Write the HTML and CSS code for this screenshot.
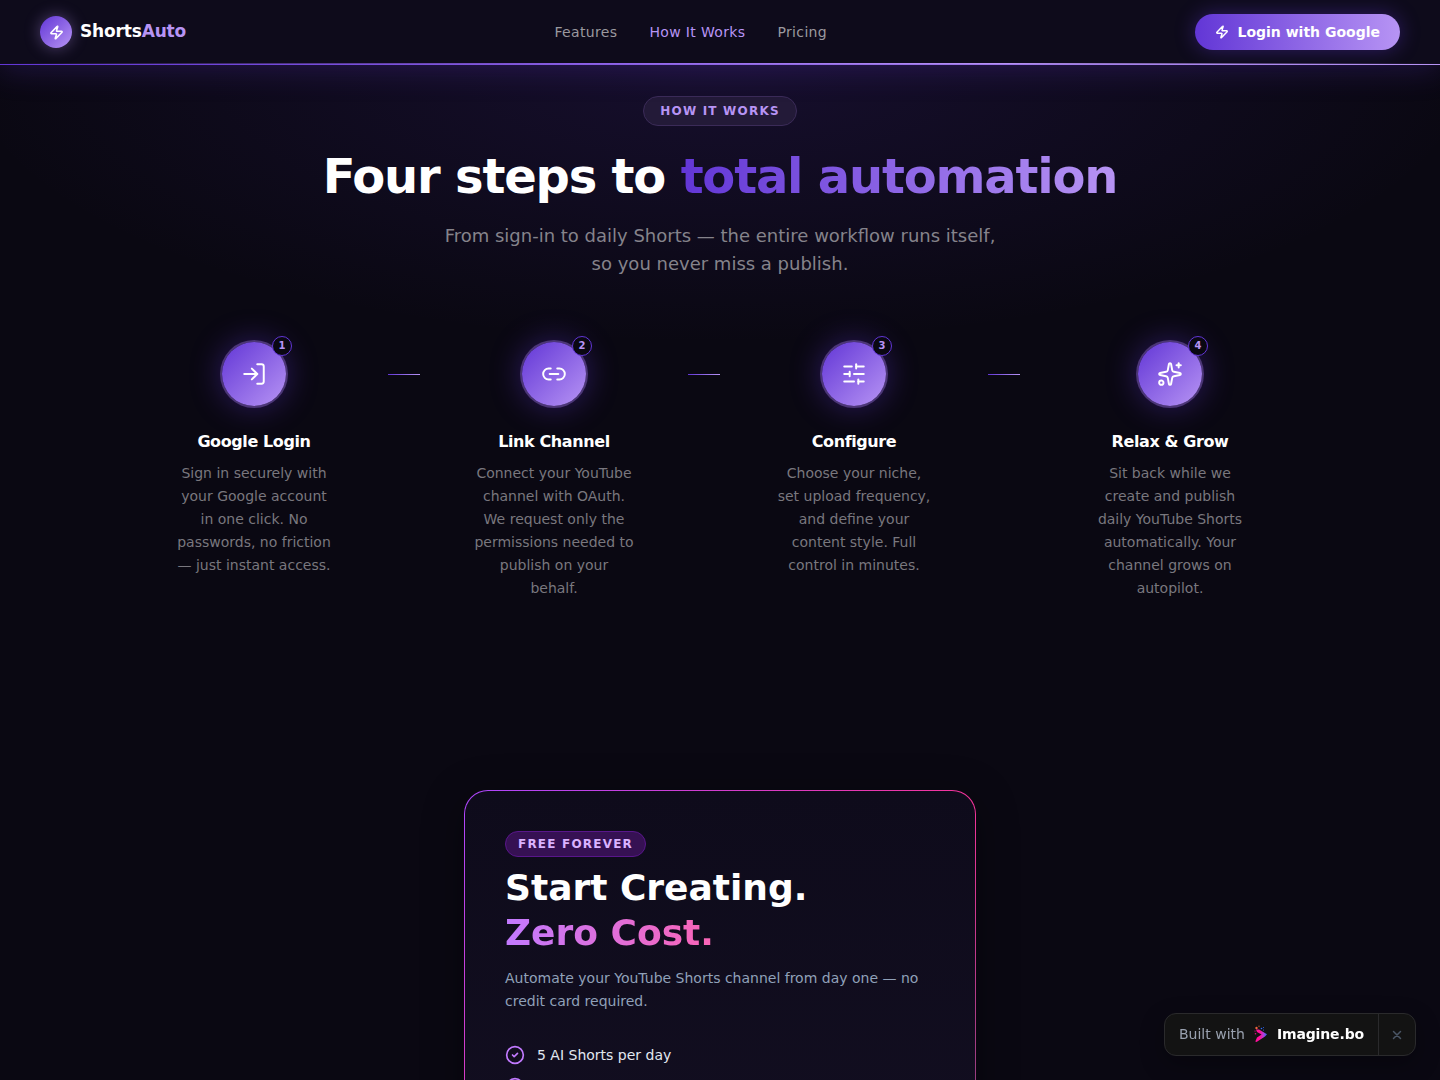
FILE: index.html
```
<!DOCTYPE html>
<html lang="en">
<head>
    <meta charset="UTF-8">
    <meta name="viewport" content="width=device-width, initial-scale=1.0">
    <title>ShortsAuto</title>
    <link rel="stylesheet" href="styles.css">
</head>
<body>
    <header class="site-header">
        <a class="logo" href="#">
            <span class="logo-mark">
                <svg width="15" height="15" viewBox="0 0 24 24" fill="none" stroke="currentColor" stroke-width="2.500" stroke-linecap="round" stroke-linejoin="round"><path d="M4 14a1 1 0 0 1-.78-1.63l9.9-10.2a.5.5 0 0 1 .86.46l-1.92 6.02A1 1 0 0 0 13 10h7a1 1 0 0 1 .78 1.63l-9.9 10.2a.5.5 0 0 1-.86-.46l1.92-6.02A1 1 0 0 0 11 14z"/></svg>
            </span>
            <span class="logo-text">Shorts<span class="logo-accent">Auto</span></span>
        </a>
        <nav class="main-nav">
            <a href="#features">Features</a>
            <a href="#how-it-works" class="active">How It Works</a>
            <a href="#pricing">Pricing</a>
        </nav>
        <button class="login-button" type="button">
            <svg width="14" height="14" viewBox="0 0 24 24" fill="none" stroke="currentColor" stroke-width="2.500" stroke-linecap="round" stroke-linejoin="round"><path d="M4 14a1 1 0 0 1-.78-1.63l9.9-10.2a.5.5 0 0 1 .86.46l-1.92 6.02A1 1 0 0 0 13 10h7a1 1 0 0 1 .78 1.63l-9.9 10.2a.5.5 0 0 1-.86-.46l1.92-6.02A1 1 0 0 0 11 14z"/></svg>
            Login with Google
        </button>
    </header>

    <main>
        <section class="how" id="how-it-works">
            <span class="pill">HOW IT WORKS</span>
            <h1>Four steps to <span class="gradient-text">total automation</span></h1>
            <p class="lead">From sign-in to daily Shorts — the entire workflow runs itself, so you never miss a publish.</p>

            <ol class="steps">
                <li class="step">
                    <div class="step-body">
                        <div class="step-icon">
                            <svg width="26" height="26" viewBox="0 0 24 24" fill="none" stroke="currentColor" stroke-width="1.800" stroke-linecap="round" stroke-linejoin="round"><path d="m10 17 5-5-5-5"/><path d="M15 12H3"/><path d="M15 3h4a2 2 0 0 1 2 2v14a2 2 0 0 1-2 2h-4"/></svg>
                            <span class="step-number">1</span>
                        </div>
                        <h2>Google Login</h2>
                        <p>Sign in securely with your Google account in one click. No passwords, no friction — just instant access.</p>
                    </div>
                    <span class="connector"></span>
                </li>
                <li class="step">
                    <div class="step-body">
                        <div class="step-icon">
                            <svg width="26" height="26" viewBox="0 0 24 24" fill="none" stroke="currentColor" stroke-width="1.800" stroke-linecap="round" stroke-linejoin="round"><path d="M9 17H7A5 5 0 0 1 7 7h2"/><path d="M15 7h2a5 5 0 1 1 0 10h-2"/><path d="M8 12h8"/></svg>
                            <span class="step-number">2</span>
                        </div>
                        <h2>Link Channel</h2>
                        <p>Connect your YouTube channel with OAuth. We request only the permissions needed to publish on your behalf.</p>
                    </div>
                    <span class="connector"></span>
                </li>
                <li class="step">
                    <div class="step-body">
                        <div class="step-icon">
                            <svg width="26" height="26" viewBox="0 0 24 24" fill="none" stroke="currentColor" stroke-width="1.800" stroke-linecap="round" stroke-linejoin="round"><path d="M10 5H3"/><path d="M21 5h-7"/><path d="M14 3v4"/><path d="M8 12H3"/><path d="M8 10v4"/><path d="M21 12h-9"/><path d="M12 19H3"/><path d="M21 19h-5"/><path d="M16 17v4"/></svg>
                            <span class="step-number">3</span>
                        </div>
                        <h2>Configure</h2>
                        <p>Choose your niche, set upload frequency, and define your content style. Full control in minutes.</p>
                    </div>
                    <span class="connector"></span>
                </li>
                <li class="step">
                    <div class="step-body">
                        <div class="step-icon">
                            <svg width="26" height="26" viewBox="0 0 24 24" fill="none" stroke="currentColor" stroke-width="1.800" stroke-linecap="round" stroke-linejoin="round"><path d="M11.017 2.814a1 1 0 0 1 1.966 0l1.051 5.558a2 2 0 0 0 1.594 1.594l5.558 1.051a1 1 0 0 1 0 1.966l-5.558 1.051a2 2 0 0 0-1.594 1.594l-1.051 5.558a1 1 0 0 1-1.966 0l-1.051-5.558a2 2 0 0 0-1.594-1.594l-5.558-1.051a1 1 0 0 1 0-1.966l5.558-1.051a2 2 0 0 0 1.594-1.594z"/><path d="M20 2v4"/><path d="M22 4h-4"/><circle cx="4" cy="20" r="2"/></svg>
                            <span class="step-number">4</span>
                        </div>
                        <h2>Relax &amp; Grow</h2>
                        <p>Sit back while we create and publish daily YouTube Shorts automatically. Your channel grows on autopilot.</p>
                    </div>
                </li>
            </ol>
        </section>

        <section class="pricing" id="pricing">
            <div class="price-card">
                <span class="tag">FREE FOREVER</span>
                <h2>Start Creating.<br><span class="pink-text">Zero Cost.</span></h2>
                <p>Automate your YouTube Shorts channel from day one — no credit card required.</p>
                <ul class="perks">
                    <li>
                        <svg width="20" height="20" viewBox="0 0 24 24" fill="none" stroke="currentColor" stroke-width="2" stroke-linecap="round" stroke-linejoin="round"><circle cx="12" cy="12" r="10"/><path d="m9 12 2 2 4-4"/></svg>
                        5 AI Shorts per day
                    </li>
                    <li>
                        <svg width="20" height="20" viewBox="0 0 24 24" fill="none" stroke="currentColor" stroke-width="2" stroke-linecap="round" stroke-linejoin="round"><circle cx="12" cy="12" r="10"/><path d="m9 12 2 2 4-4"/></svg>
                    </li>
                </ul>
            </div>
        </section>
    </main>

    <div class="badge">
        <a class="badge-link" href="#">
            <span>Built with</span>
            <svg width="16" height="18" viewBox="0 0 16 18">
                <defs>
                    <linearGradient id="badgeFill" x1="0" y1="0" x2="1" y2="0">
                        <stop offset="0.4" stop-color="#ff0f9a"/>
                        <stop offset="0.7" stop-color="#b43cd8"/>
                        <stop offset="1" stop-color="#2f6bff"/>
                    </linearGradient>
                </defs>
                <path d="M3 4.500 6 4.500 14 9.300 12 11.500 3.500 17 2.300 16.500 4 12.500 8.500 9.500 4 7z" fill="url(#badgeFill)"/>
                <circle cx="3.500" cy="3" r="1.200" fill="#f2663a"/>
                <circle cx="6" cy="1.200" r=".6" fill="#f2663a"/>
                <circle cx="2" cy="6" r=".6" fill="#ff0f9a"/>
                <circle cx="2.500" cy="8.800" r=".8" fill="#e0148a"/>
                <circle cx="8.500" cy="3.500" r=".8" fill="#2f6bff"/>
                <circle cx="10.500" cy="2.500" r=".5" fill="#2f6bff"/>
                <circle cx="10.500" cy="5" r=".6" fill="#2f6bff"/>
            </svg>
            <strong>Imagine.bo</strong>
        </a>
        <button class="badge-close" type="button" aria-label="Close">
            <svg width="12" height="12" viewBox="0 0 24 24" fill="none" stroke="currentColor" stroke-width="3" stroke-linecap="round"><path d="M5 5 19 19M19 5 5 19"/></svg>
        </button>
    </div>
</body>
</html>
```

FILE: styles.css
```
* {
    box-sizing: border-box;
}

body {
    margin: 0;
    font-family: "DejaVu Sans", sans-serif;
    color: white;
    background: #0a0812;
}

h1, h2, p, ol, ul {
    margin: 0;
    padding: 0;
}

ol, ul {
    list-style: none;
}

a {
    color: inherit;
    text-decoration: none;
}

svg {
    display: block;
    flex-shrink: 0;
}

button {
    font: inherit;
    border: none;
    cursor: pointer;
}

.site-header {
    position: sticky;
    top: 0;
    z-index: 10;
    height: 64px;
    padding: 0 40px;
    display: flex;
    align-items: center;
    justify-content: space-between;
    background: #0e0b1b;
    box-shadow: 0 4px 32px rgba(98, 54, 214, 0.25);
}

/* glowing divider: full-width line with a brighter middle above it */
.site-header::after {
    content: '';
    position: absolute;
    left: 0;
    right: 0;
    top: 63px;
    height: 2px;
    background:
        linear-gradient(90deg, transparent, #8b5fe6 40%, #b794f4 70%, transparent) top / 100% 1px no-repeat,
        linear-gradient(90deg, #6236d6, #b794f4) bottom / 100% 1px no-repeat;
}

.logo {
    display: flex;
    align-items: center;
    gap: 8px;
}

.logo-mark {
    width: 32px;
    height: 32px;
    border-radius: 50%;
    display: flex;
    align-items: center;
    justify-content: center;
    background: linear-gradient(135deg, #6236d6, #b794f4);
    box-shadow: 0 0 16px rgba(183, 148, 244, 0.4);
}

.logo-text {
    font-size: 17px;
    line-height: 28px;
    padding-bottom: 2px;
    font-weight: 700;
    letter-spacing: -0.01em;
}

.logo-accent {
    color: #b794f4;
}

.main-nav {
    display: flex;
    gap: 32px;
    font-size: 14px;
    line-height: 20px;
    letter-spacing: 0.025em;
    color: #9b999f;
}

.main-nav .active {
    color: #b794f4;
}

.login-button {
    height: 36px;
    padding: 0 20px;
    display: flex;
    align-items: center;
    gap: 8px;
    border-radius: 18px;
    color: white;
    font-size: 14px;
    font-weight: 600;
    background: linear-gradient(90deg, #6236d6, #b794f4);
    box-shadow: 0 0 20px rgba(98, 54, 214, 0.4);
}

.how {
    padding: 32px 120px 94px;
    display: flex;
    flex-direction: column;
    align-items: center;
    text-align: center;
    background: radial-gradient(ellipse 760px 280px at 50% 0, rgba(98, 54, 214, 0.14), transparent);
}

.pill {
    padding: 6px 16px;
    border: 1px solid #3b2b58;
    border-radius: 15px;
    background: #231a38;
    color: #b794f4;
    font-size: 12px;
    line-height: 16px;
    font-weight: 600;
    letter-spacing: 0.1em;
}

.how h1 {
    margin-top: 20px;
    font-size: 48px;
    line-height: 60px;
    font-weight: 700;
    letter-spacing: -0.025em;
}

.gradient-text {
    background: linear-gradient(90deg, #6236d6, #b794f4);
    -webkit-background-clip: text;
    background-clip: text;
    color: transparent;
}

.lead {
    max-width: 576px;
    margin-top: 16px;
    font-size: 18px;
    line-height: 28px;
    color: #85838b;
}

.steps {
    width: 100%;
    max-width: 1200px;
    margin-top: 64px;
    display: grid;
    grid-template-columns: repeat(4, 1fr);
}

.step {
    display: flex;
}

.step-body {
    flex: 1;
    display: flex;
    flex-direction: column;
    align-items: center;
}

.step-icon {
    position: relative;
    width: 64px;
    height: 64px;
    border-radius: 50%;
    display: flex;
    align-items: center;
    justify-content: center;
    background: linear-gradient(135deg, #6236d6, #b794f4);
    box-shadow: 0 0 0 2px #4c3677, 0 0 32px rgba(98, 54, 214, 0.45);
}

.step-number {
    position: absolute;
    top: -6px;
    right: -6px;
    width: 20px;
    height: 20px;
    border: 1px solid #6236d6;
    border-radius: 50%;
    background: #0a0812;
    color: #b794f4;
    font-size: 10px;
    line-height: 18px;
    font-weight: 700;
}

.step h2 {
    margin-top: 24px;
    font-size: 16px;
    line-height: 24px;
    font-weight: 600;
    letter-spacing: -0.025em;
}

.step p {
    max-width: 160px;
    margin-top: 8px;
    font-size: 14px;
    line-height: 23px;
    color: #79777e;
}

.connector {
    width: 32px;
    height: 1px;
    margin-top: 32px;
    background: linear-gradient(90deg, #6236d6, #b794f4);
}

.pricing {
    padding: 96px 16px;
    display: flex;
    justify-content: center;
}

.price-card {
    width: 100%;
    max-width: 512px;
    padding: 40px;
    border: 1px solid transparent;
    border-radius: 24px;
    background:
        linear-gradient(#0e0b1b, #120e20) padding-box,
        linear-gradient(135deg, #ad46ff, #f6339a 60%, #84407a) border-box;
    box-shadow: 0 8px 40px rgba(0, 0, 0, 0.35);
}

.tag {
    display: inline-block;
    padding: 4px 12px;
    border: 1px solid #59168b;
    border-radius: 13px;
    background: #361153;
    color: #dab2ff;
    font-size: 12px;
    line-height: 16px;
    font-weight: 600;
    letter-spacing: 0.1em;
}

.price-card h2 {
    margin-top: 8px;
    font-size: 36px;
    line-height: 45px;
    font-weight: 700;
}

.pink-text {
    background: linear-gradient(90deg, #c27aff, #fb64b6);
    -webkit-background-clip: text;
    background-clip: text;
    color: transparent;
}

.price-card p {
    margin-top: 12px;
    font-size: 14px;
    line-height: 23px;
    color: #90a1b9;
}

.perks {
    margin-top: 32px;
    display: flex;
    flex-direction: column;
    gap: 12px;
    font-size: 14px;
    line-height: 20px;
    color: #e2e8f0;
}

.perks li {
    display: flex;
    align-items: center;
    gap: 12px;
}

.perks svg {
    color: #c27aff;
}

.badge {
    position: fixed;
    right: 24px;
    bottom: 24px;
    z-index: 20;
    display: flex;
    border: 1px solid #2a2a2c;
    border-radius: 12px;
    overflow: hidden;
    background: #131313;
    box-shadow: 0 8px 24px rgba(0, 0, 0, 0.3);
    font-size: 14px;
    line-height: 20px;
}

.badge-link {
    padding: 10px 14px 11px;
    display: flex;
    align-items: center;
    gap: 8px;
    color: #99a1af;
}

.badge-link strong {
    color: white;
    font-weight: 600;
    letter-spacing: -0.01em;
}

.badge-close {
    width: 37px;
    padding: 0;
    display: flex;
    align-items: center;
    justify-content: center;
    border-left: 1px solid #2a2a2c;
    background: transparent;
    color: #4a5565;
}
```
